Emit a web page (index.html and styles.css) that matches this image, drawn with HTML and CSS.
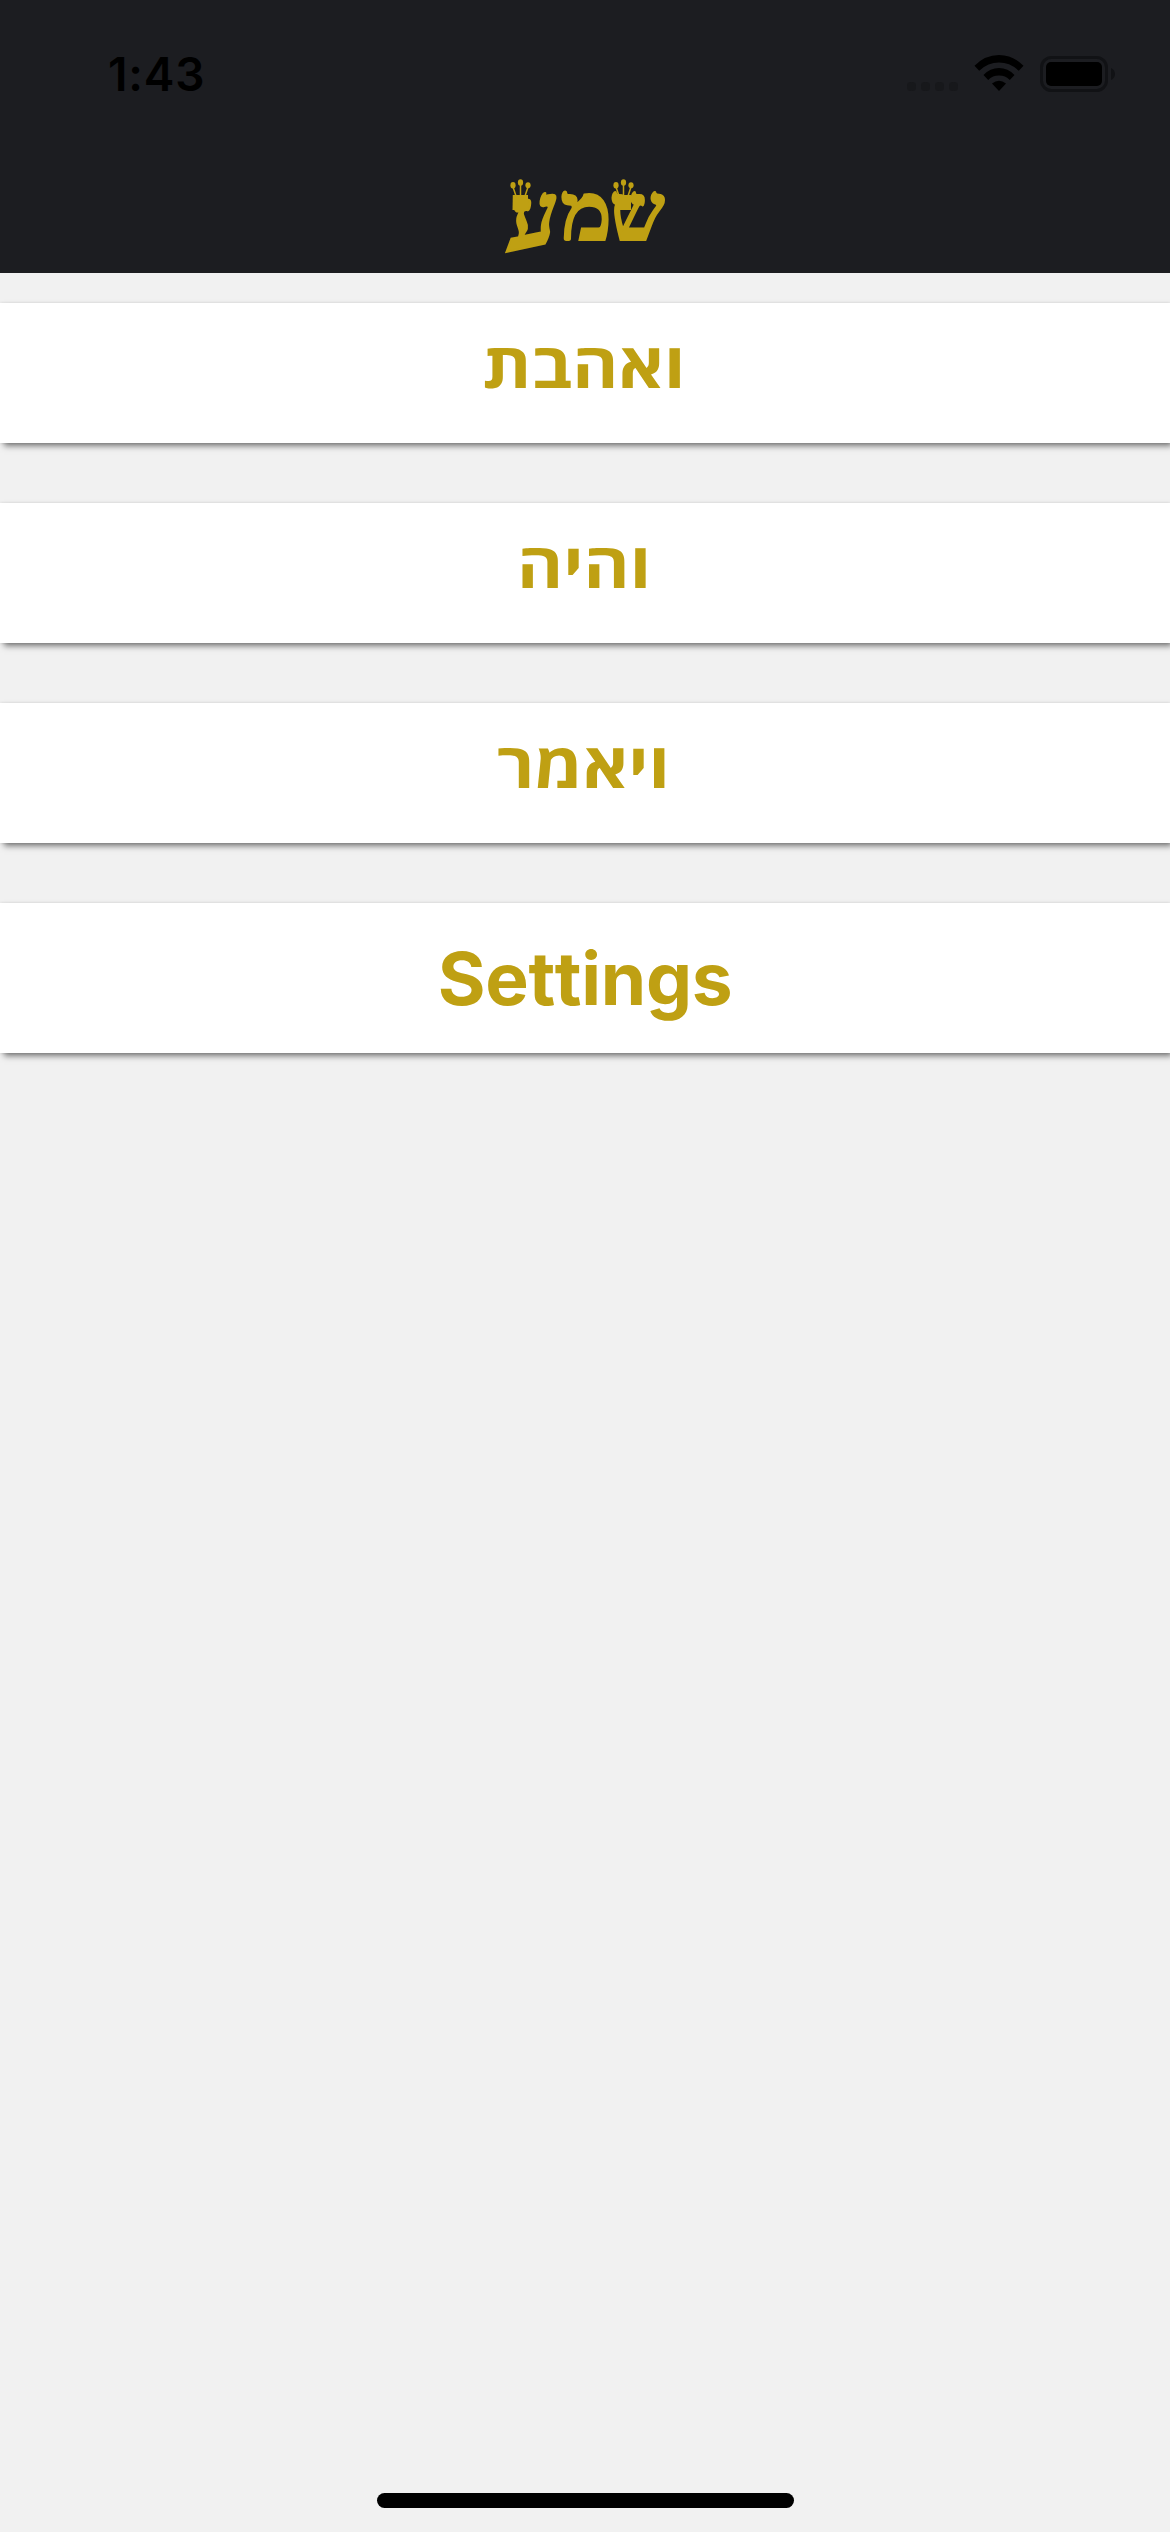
FILE: index.html
```html
<!DOCTYPE html>
<html lang="he">
<head>
<meta charset="utf-8">
<title>שמע</title>
<link rel="stylesheet" href="styles.css">
</head>
<body>
<div class="screen">
  <header class="header">
    <div class="status">
      <span class="time">1:43</span>
      <svg class="status-icons" width="220" height="40" viewBox="0 0 220 40">
        <g fill="#17181b">
          <rect x="2" y="27" width="9" height="9" rx="3.5"/><rect x="16" y="27" width="9" height="9" rx="3.5"/><rect x="30" y="27" width="9" height="9" rx="3.5"/><rect x="44" y="27" width="9" height="9" rx="3.5"/>
        </g>
        <path d="M69.500 10.800Q80 0 94 0T118.500 10.800L113.800 15.800Q105 7.600 94 7.600T74.200 15.800Z"/>
        <path d="M78.500 20Q85 13 94 13T109.500 20L104.800 25Q100.500 20.600 94 20.600T83.200 25Z"/>
        <path d="M87 28.600Q94 23 101 28.600L94 36Z"/>
        <rect x="136.500" y="2.500" width="65" height="33" rx="10" fill="none" stroke="#111215" stroke-width="3"/>
        <rect x="141" y="7" width="56" height="24" rx="5"/>
        <path d="M206 13Q210 15 210 19T206 25Z" fill="#111215"/>
      </svg>
    </div>
    <h1 class="logo" dir="rtl"><span class="shin">ש</span><span class="mem">מ</span><span class="ayin">ע</span>
      <svg class="crown crown-left" width="22" height="32" viewBox="0 0 22 32"><g id="crown"><ellipse cx="3" cy="6.200" rx="2.600" ry="3.200"/><ellipse cx="10.500" cy="3.500" rx="2.600" ry="3.300"/><ellipse cx="18" cy="6.200" rx="2.600" ry="3"/><path d="M3 8L6 17M10.500 6V17M18 8L15 17" stroke="#bfa013" stroke-width="1.500"/><path d="M2.800 16H18V31H2.500Z"/></g></svg>
      <svg class="crown crown-right" width="22" height="32" viewBox="0 0 22 32"><use href="#crown"/></svg>
    </h1>
  </header>
  <main class="menu">
    <div class="card" dir="rtl"><span class="label">ואהבת</span></div>
    <div class="card" dir="rtl"><span class="label">והיה</span></div>
    <div class="card" dir="rtl"><span class="label">ויאמר</span></div>
    <div class="card settings" lang="en"><span>Settings</span></div>
  </main>
  <div class="home-bar"></div>
</div>
</body>
</html>
```
FILE: styles.css
```css
* { box-sizing: border-box; }
body { margin: 0; }
.screen {
  width: 1170px;
  height: 2532px;
  display: flex;
  flex-direction: column;
  align-items: center;
  background: #f1f1f1;
  overflow: hidden;
}
.header {
  width: 100%;
  height: 273px;
  background: #1c1d21;
}
.status {
  height: 165px;
  padding: 55px 45px 0 108px;
  display: flex;
  justify-content: space-between;
  align-items: flex-start;
}
.time {
  font: 600 46px/38px Inter, sans-serif;
  letter-spacing: .8px;
  color: #000;
}
.status-icons { display: block; }
.logo {
  position: relative;
  margin: 0 auto;
  width: 162px;
  height: 96px;
  display: flex;
  justify-content: space-between;
  font: bold 82px/96px "Liberation Serif", serif;
  color: #bfa013;
  -webkit-text-stroke: 2px #bfa013;
}
.logo span { transform-origin: 50% 76px; }
.shin { transform: scaleX(.95); }
.mem { transform: translateX(7px) scaleX(1.06); }
.ayin { transform: translate(2px, 7px) scale(1.08, 1.08) skew(-8deg, -12deg); }
.crown {
  position: absolute;
  top: 14px;
  fill: #bfa013;
}
.crown-left { left: 6px; }
.crown-right { left: 109px; }
.menu {
  width: 100%;
  padding-top: 30px;
  display: flex;
  flex-direction: column;
  gap: 60px;
}
.card {
  height: 140px;
  display: flex;
  justify-content: center;
  background: #fff;
  box-shadow: 3px 4px 6px -1px rgba(0, 0, 0, .5), 0 0 3px rgba(0, 0, 0, .12);
  font: 700 63px/121px "Open Sans", sans-serif;
  color: #bfa013;
}
.label { transform: translateX(-1px) scaleX(1.115); }
.settings {
  height: 150px;
  font: 700 73px/151px Inter, sans-serif;
  font-feature-settings: "calt" 0, "liga" 0;
  font-kerning: none;
  letter-spacing: -.3px;
}
.home-bar {
  width: 417px;
  height: 15px;
  margin-top: auto;
  margin-bottom: 24px;
  border-radius: 8px;
  background: #000;
}
```
